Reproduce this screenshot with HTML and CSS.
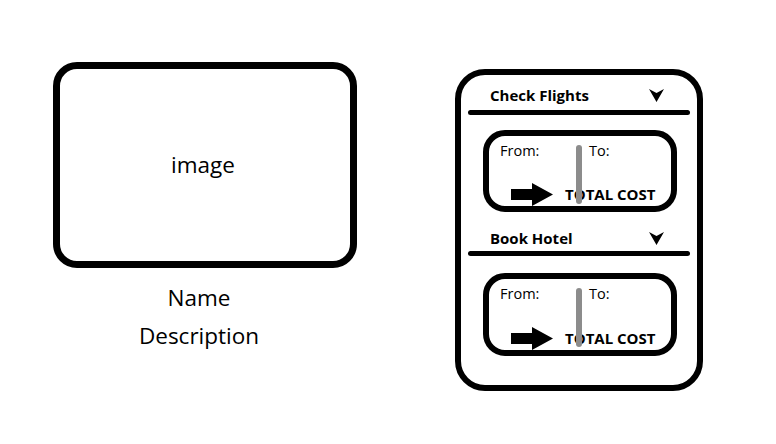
FILE: index.html
```html
<!DOCTYPE html>
<html>
<head>
<meta charset="utf-8">
<link rel="stylesheet" href="styles.css">
</head>
<body>
<div class="page">
  <div class="item">
    <div class="image-box">image</div>
    <div class="name">Name</div>
    <div class="desc">Description</div>
  </div>
  <div class="phone">
    <div class="section">
      <div class="head head-first">
        <span class="title">Check Flights</span>
        <svg class="chev" width="15" height="13" viewBox="0 0 15 13"><path d="M0 0 L7.5 4 L15 0 L7.5 13 Z" fill="#000"/></svg>
      </div>
      <div class="rule rule-first"></div>
      <div class="card">
        <div class="row-top"><span>From:</span><span>To:</span></div>
        <div class="row-bottom">
          <svg class="arrow" width="42" height="23" viewBox="0 0 42 23"><path d="M0 6 H21 V0 L42 11.5 L21 23 V17 H0 Z" fill="#000"/></svg>
          <span class="total">TOTAL COST</span>
        </div>
        <div class="bar"></div>
      </div>
    </div>
    <div class="section section-second">
      <div class="head">
        <span class="title">Book Hotel</span>
        <svg class="chev" width="15" height="13" viewBox="0 0 15 13"><path d="M0 0 L7.5 4 L15 0 L7.5 13 Z" fill="#000"/></svg>
      </div>
      <div class="rule rule-second"></div>
      <div class="card card-second">
        <div class="row-top"><span>From:</span><span>To:</span></div>
        <div class="row-bottom">
          <svg class="arrow" width="42" height="23" viewBox="0 0 42 23"><path d="M0 6 H21 V0 L42 11.5 L21 23 V17 H0 Z" fill="#000"/></svg>
          <span class="total">TOTAL COST</span>
        </div>
        <div class="bar"></div>
      </div>
    </div>
  </div>
</div>
</body>
</html>
```
FILE: styles.css
```css
* { box-sizing: border-box; }
html, body { margin: 0; padding: 0; background: #fff; }
body {
  font-family: "Open Sans", "Noto Sans", sans-serif;
  color: #000;
  width: 776px;
  height: 444px;
  overflow: hidden;
}
.page {
  display: flex;
  align-items: flex-start;
}
.item {
  margin-left: 53px;
  margin-top: 62px;
  width: 304px;
  display: flex;
  flex-direction: column;
  align-items: center;
}
.image-box {
  width: 304px;
  height: 206px;
  border: 7px solid #000;
  border-radius: 24px;
  display: flex;
  align-items: center;
  justify-content: center;
  font-size: 22.5px;
  padding-bottom: 2px;
  padding-right: 4px;
}
.name, .desc {
  font-size: 22.5px;
  line-height: 38px;
  padding-right: 12px;
}
.name { margin-top: 11px; }

.phone {
  margin-left: 98px;
  margin-top: 69px;
  width: 248px;
  height: 322px;
  border: 6px solid #000;
  border-radius: 30px;
  padding-top: 10px;
}
.head {
  display: flex;
  justify-content: space-between;
  align-items: flex-start;
  padding: 0 33px 0 29px;
  height: 20px;
}
.title {
  font-weight: 700;
  font-size: 15px;
  line-height: 20px;
}
.chev { margin-top: 4px; }
.rule {
  height: 5px;
  background: #000;
  border-radius: 3px;
  margin: 0 7px;
}
.rule-first { margin-top: 5px; }
.rule-second { margin-top: 3px; }
.section-second { margin-top: 16px; }
.card {
  position: relative;
  margin: 15px 20px 0 22px;
  height: 82px;
  border: 6px solid #000;
  border-radius: 22px;
  padding: 5px 0 0 11px;
  display: flex;
  flex-direction: column;
  justify-content: space-between;
}
.card-second { margin-top: 17px; height: 83px; }
.row-top {
  display: grid;
  grid-template-columns: 89px auto;
  font-size: 14.5px;
  line-height: 20px;
}
.row-bottom {
  display: flex;
  align-items: center;
  height: 23px;
  margin-left: 11px;
}
.arrow { display: block; }
.total {
  font-weight: 700;
  font-size: 15px;
  line-height: 20px;
  margin-left: 12px;
  margin-top: -2px;
}
.bar {
  position: absolute;
  left: 87px;
  top: 9px;
  width: 6px;
  height: 59px;
  border-radius: 3px;
  background: #8c8c8c;
}
```
